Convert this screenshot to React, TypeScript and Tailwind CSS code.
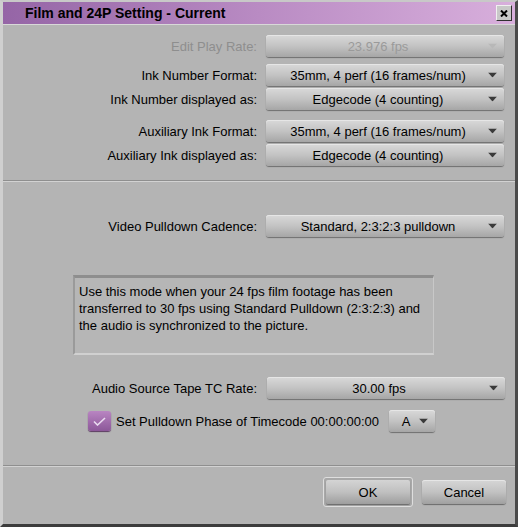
import type { ReactNode } from 'react';

function Arrow({ dim }: { dim?: boolean }) {
  return (
    <svg width="9" height="5" viewBox="0 0 9 5" className="absolute right-[7px] top-1/2 -translate-y-1/2">
      <path d="M0 0 H9 L4.5 5 Z" fill={dim ? '#b8b8b8' : '#3a3a3a'} />
    </svg>
  );
}

function Drop({ children, dim }: { children: ReactNode; dim?: boolean }) {
  return (
    <div
      className={`relative flex h-[22px] w-[238px] items-center justify-center rounded-[3px] bg-gradient-to-b from-[#d9d9d9] via-[#c3c3c3] to-[#a6a6a6] pr-[14px] shadow-[inset_0_1px_0_#e6e6e6,0_1px_1px_#6e6e6e] ${
        dim ? 'text-[#9a9a9a]' : 'text-black'
      }`}
    >
      {children}
      <Arrow dim={dim} />
    </div>
  );
}

function Row({ label, value, dim, className = '' }: { label: string; value: string; dim?: boolean; className?: string }) {
  return (
    <div className={`flex items-center ${className}`}>
      <div className={`w-[256px] whitespace-nowrap pr-[2px] text-right ${dim ? 'text-[#8e8e8e]' : 'text-black'}`}>{label}</div>
      <div className="ml-[7px]">
        <Drop dim={dim}>{value}</Drop>
      </div>
    </div>
  );
}

function Sep({ className = '' }: { className?: string }) {
  return <div className={`h-[2px] border-t border-[#8f8f8f] border-b border-b-[#d2d2d2] ${className}`} />;
}

export default function App() {
  return (
    <div
      className="relative h-[527px] w-[518px] overflow-hidden bg-[#b4b4b4] text-[13px] leading-[15px]"
      style={{ fontFamily: '"Liberation Sans", Arial, sans-serif' }}
    >
      <div className="flex h-full flex-col border-l-[3px] border-l-[#cfcfcf] border-r-[3px] border-r-[#4a4a4a] border-b-[3px] border-b-[#3c3c3c] border-t-[2px] border-t-[#c8c8c8]">
        {/* title bar */}
        <div className="flex h-[22px] items-center justify-between bg-gradient-to-r from-[#9565a6] via-[#b98bc3] to-[#d8afdc] pl-[22px] pr-[3px]">
          <span className="text-[14px] font-bold text-black">Film and 24P Setting - Current</span>
          <div className="flex h-[16px] w-[16px] items-center justify-center border border-t-[#f0f0f0] border-l-[#f0f0f0] border-r-[#303030] border-b-[#303030] bg-[#c8c8c8]">
            <svg width="8" height="7" viewBox="0 0 8 7">
              <path d="M1 0.5 L7 6.5 M7 0.5 L1 6.5" stroke="#000" strokeWidth="2" />
            </svg>
          </div>
        </div>
        <div className="h-[1px] bg-[#d8d8d8]" />

        <div className="flex flex-col">
          <Row className="mt-[10px]" label="Edit Play Rate:" value="23.976 fps" dim />
          <Row className="mt-[7px]" label="Ink Number Format:" value="35mm, 4 perf (16 frames/num)" />
          <Row className="mt-[2px]" label="Ink Number displayed as:" value="Edgecode (4 counting)" />
          <Row className="mt-[10px]" label="Auxiliary Ink Format:" value="35mm, 4 perf (16 frames/num)" />
          <Row className="mt-[2px]" label="Auxiliary Ink displayed as:" value="Edgecode (4 counting)" />
          <Sep className="mt-[14px]" />
          <Row className="mt-[33px]" label="Video Pulldown Cadence:" value="Standard, 2:3:2:3 pulldown" />

          <div className="ml-[70px] mt-[38px] h-[80px] w-[361px] border-t-[3px] border-l-[2px] border-t-[#8e8e8e] border-l-[#9a9a9a] border-r border-r-[#c8c8c8] border-b-[2px] border-b-[#d0d0d0] bg-[#b6b6b6] pl-[4px] pt-[5px] leading-[17px] text-black">
            Use this mode when your 24 fps film footage has been
            <br />
            transferred to 30 fps using Standard Pulldown (2:3:2:3) and
            <br />
            the audio is synchronized to the picture.
          </div>

          <div className="mt-[22px] flex items-center">
            <div className="w-[257px] whitespace-nowrap pr-[3px] text-right">Audio Source Tape TC Rate:</div>
            <div className="ml-[7px]">
              <Drop>30.00 fps</Drop>
            </div>
          </div>

          <div className="mt-[11px] flex items-center">
            <div className="ml-[85px] flex h-[20px] w-[23px] items-center justify-center rounded-[3px] bg-gradient-to-b from-[#b985c2] to-[#8c5899] shadow-[0_1px_1px_#5a3a60]">
              <svg width="13" height="9" viewBox="0 0 13 9">
                <path d="M1 4.5 L4.5 8 L12 1" stroke="#eadcf0" strokeWidth="1.6" fill="none" />
              </svg>
            </div>
            <span className="ml-[5px] whitespace-nowrap">Set Pulldown Phase of Timecode 00:00:00:00</span>
            <div className="relative ml-[10px] flex h-[22px] w-[46px] items-center justify-center rounded-[3px] bg-gradient-to-b from-[#d9d9d9] via-[#c3c3c3] to-[#a6a6a6] pr-[12px] shadow-[inset_0_1px_0_#e6e6e6,0_1px_1px_#6e6e6e]">
              A
              <Arrow />
            </div>
          </div>

          <Sep className="mt-[33px]" />

          <div className="mt-[10px] flex items-center justify-end pr-[9px]">
            <div className="flex h-[30px] w-[90px] items-center justify-center rounded-[3px] border border-[#dedede] bg-[#a8a8a8] p-[2px]">
              <div className="flex h-full w-full items-center justify-center rounded-[2px] bg-gradient-to-b from-[#d4d4d4] via-[#c0c0c0] to-[#9e9e9e] shadow-[0_1px_1px_#6a6a6a]">
                OK
              </div>
            </div>
            <div className="ml-[9px] flex h-[24px] w-[84px] items-center justify-center rounded-[3px] bg-gradient-to-b from-[#d6d6d6] via-[#c2c2c2] to-[#a0a0a0] shadow-[inset_0_1px_0_#e6e6e6,0_1px_1px_#6a6a6a]">
              Cancel
            </div>
          </div>
        </div>
      </div>
    </div>
  );
}
